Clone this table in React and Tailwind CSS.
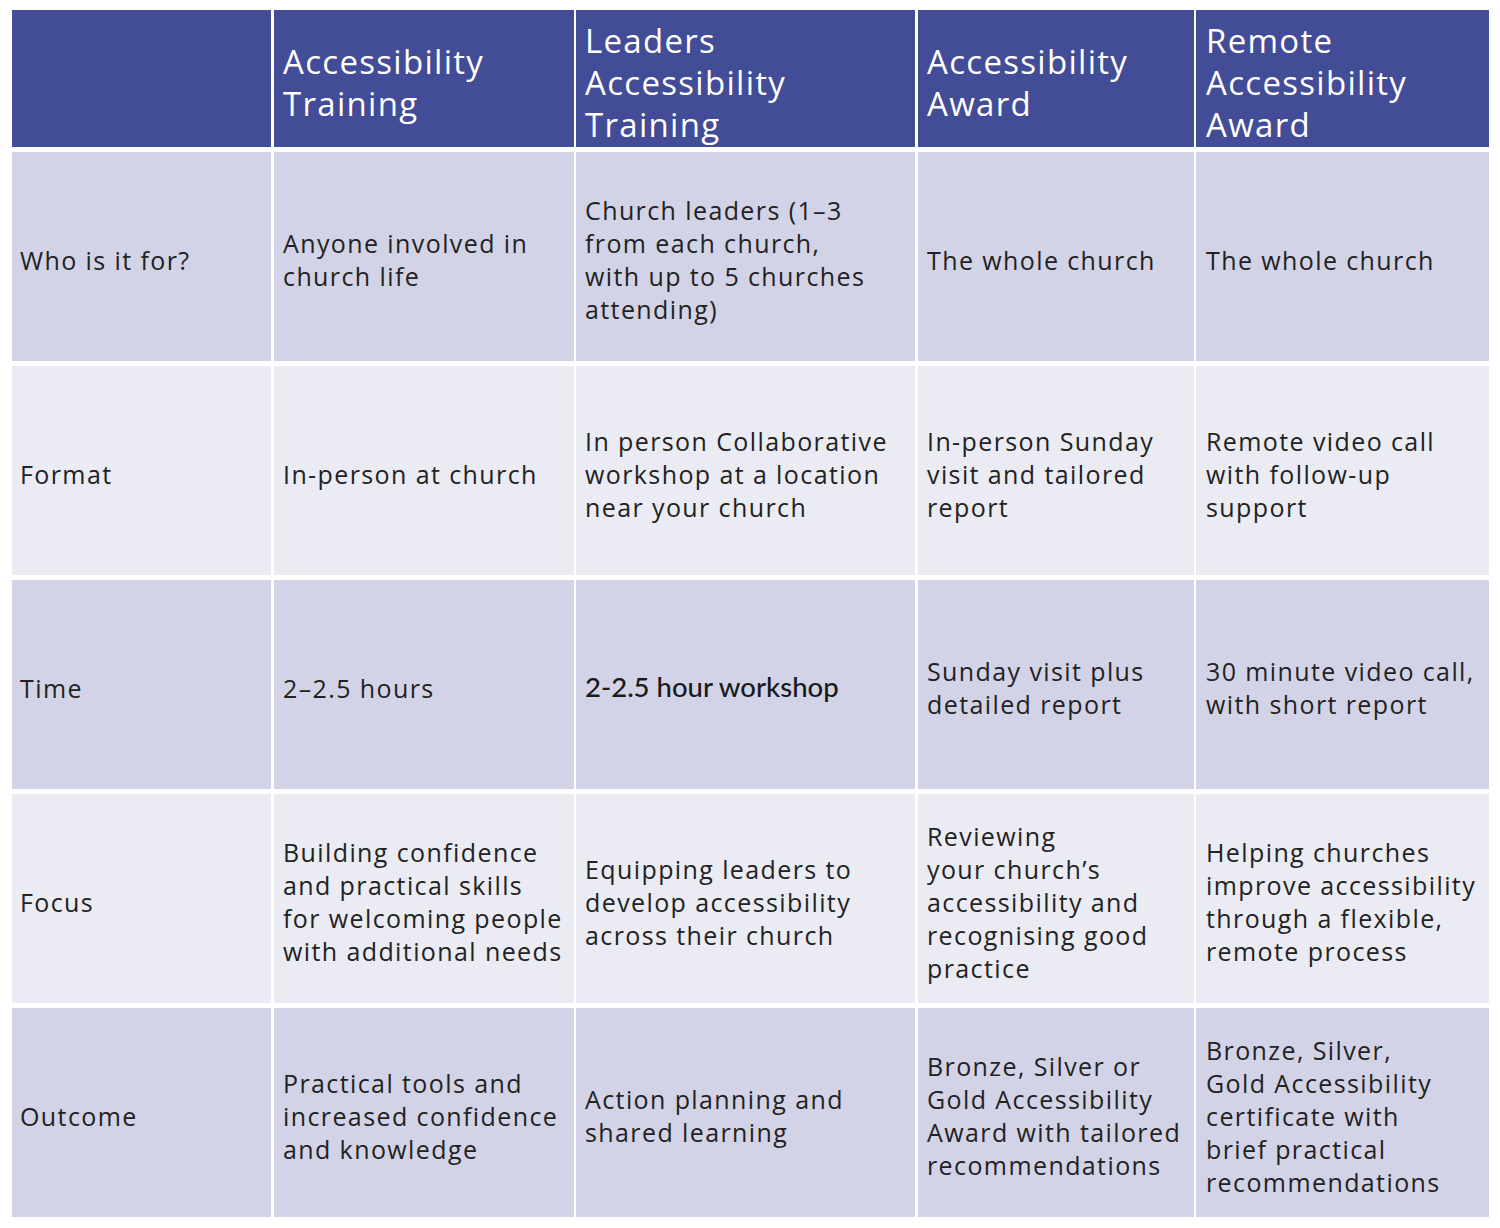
import React from "react";

const header = [
  [],
  ["Accessibility", "Training"],
  ["Leaders", "Accessibility", "Training"],
  ["Accessibility", "Award"],
  ["Remote", "Accessibility", "Award"],
];

const rows = [
  {
    bg: "bg-[#d2d3e6]",
    cells: [
      ["Who is it for?"],
      ["Anyone involved in", "church life"],
      ["Church leaders (1–3", "from each church,", "with up to 5 churches", "attending)"],
      ["The whole church"],
      ["The whole church"],
    ],
  },
  {
    bg: "bg-[#eaebf3]",
    cells: [
      ["Format"],
      ["In-person at church"],
      ["In person Collaborative", "workshop at a location", "near your church"],
      ["In-person Sunday", "visit and tailored", "report"],
      ["Remote video call", "with follow-up", "support"],
    ],
  },
  {
    bg: "bg-[#d2d3e6]",
    cells: [
      ["Time"],
      ["2–2.5 hours"],
      "SPECIAL",
      ["Sunday visit plus", "detailed report"],
      ["30 minute video call,", "with short report"],
    ],
  },
  {
    bg: "bg-[#eaebf3]",
    cells: [
      ["Focus"],
      ["Building confidence", "and practical skills", "for welcoming people", "with additional needs"],
      ["Equipping leaders to", "develop accessibility", "across their church"],
      ["Reviewing", "your church’s", "accessibility and", "recognising good", "practice"],
      ["Helping churches", "improve accessibility", "through a flexible,", "remote process"],
    ],
  },
  {
    bg: "bg-[#d2d3e6]",
    cells: [
      ["Outcome"],
      ["Practical tools and", "increased confidence", "and knowledge"],
      ["Action planning and", "shared learning"],
      ["Bronze, Silver or", "Gold Accessibility", "Award with tailored", "recommendations"],
      ["Bronze, Silver,", "Gold Accessibility", "certificate with", "brief practical", "recommendations"],
    ],
  },
];

const colClasses = [
  "w-[262px] border-r-[3px] pl-[8px]",
  "w-[302px] border-r-[2px] pl-[9px]",
  "w-[342px] border-r-[3px] pl-[9px]",
  "w-[278px] border-r-[2px] pl-[9px]",
  "w-[293px] pl-[10px]",
];

function Lines({ lines }) {
  return lines.map((l, i) => (
    <div key={i} className="whitespace-nowrap">
      {l}
    </div>
  ));
}

export default function App() {
  return (
    <div className="w-[1500px] h-[1228px] bg-white pt-[10px] pl-[12px]">
      <div className="flex flex-col gap-[4.5px] w-[1477px]">
        <div className="flex h-[137px]">
          {header.map((lines, i) => (
            <div
              key={i}
              className={`${colClasses[i]} border-white bg-[#434c96] text-white flex flex-col justify-center pt-[9px] text-[33px] leading-[42px] tracking-[1.3px] font-['Open_Sans',sans-serif]`}
            >
              <Lines lines={lines} />
            </div>
          ))}
        </div>
        {rows.map((row, r) => (
          <div key={r} className="flex h-[209.5px]">
            {row.cells.map((lines, i) => (
              <div
                key={i}
                className={`${colClasses[i]} ${row.bg} border-white text-[#222222] flex flex-col justify-center pt-[8px] text-[25px] leading-[33px] tracking-[1.4px] font-['Open_Sans',sans-serif]`}
              >
                {lines === "SPECIAL" ? (
                  <div className="whitespace-nowrap font-['Lato',sans-serif] font-medium tracking-normal text-[27.5px] leading-[33px] text-[#1a1a1a] pb-[4px]">
                    2-2.5 hour workshop
                  </div>
                ) : (
                  <Lines lines={lines} />
                )}
              </div>
            ))}
          </div>
        ))}
      </div>
    </div>
  );
}
